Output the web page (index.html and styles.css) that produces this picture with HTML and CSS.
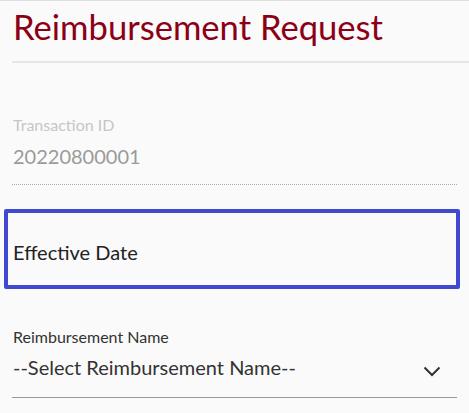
FILE: index.html
```html
<!DOCTYPE html>
<html>
<head>
<meta charset="utf-8">
<link rel="stylesheet" href="styles.css">
</head>
<body>
<div class="page">
  <header class="header">
    <h1 class="title">Reimbursement Request</h1>
  </header>
  <div class="form">
    <div class="field readonly">
      <div class="label">Transaction ID</div>
      <div class="value">20220800001</div>
    </div>
    <div class="focus-box">
      <div class="focus-text">Effective Date</div>
    </div>
    <div class="field select">
      <div class="label dark">Reimbursement Name</div>
      <div class="select-row">
        <span class="select-text">--Select Reimbursement Name--</span>
        <svg class="chevron" width="18" height="11" viewBox="0 0 18 11"><path d="M1.5 1.5 L9 9 L16.5 1.5" fill="none" stroke="#333" stroke-width="2"/></svg>
      </div>
    </div>
  </div>
</div>
</body>
</html>
```
FILE: styles.css
```css
html, body {
  margin: 0;
  padding: 0;
  background: #fafafa;
}
body {
  font-family: Lato, "Noto Sans", sans-serif;
}
.page {
  border-top: 1px solid #dedede;
  width: 469px;
  height: 412px;
  overflow: hidden;
}
.header {
  margin-left: 12px;
  padding-top: 5px;
  padding-bottom: 13px;
  border-bottom: 2px solid #e6e6e6;
}
.title {
  margin: 0;
  font-size: 34.6px;
  font-weight: 400;
  line-height: 42px;
  color: #8c0016;
  padding-left: 1px;
}
.form {
  padding: 0 12px;
}
.field {
  display: flex;
  flex-direction: column;
}
.readonly {
  padding-top: 53px;
  padding-bottom: 16px;
  border-bottom: 1px dotted #aaa;
}
.label {
  font-size: 16px;
  line-height: 18px;
  color: #c6c6c6;
  padding-left: 1px;
}
.value {
  margin-top: 10px;
  font-size: 20px;
  line-height: 24px;
  color: #9a9a9a;
  padding-left: 1px;
}
.focus-box {
  margin: 24px 0 0 -8px;
  width: 443px;
  height: 51px;
  border: 4px solid #4049cf;
  border-radius: 2px;
  display: flex;
  align-items: flex-end;
  padding: 0 0 21px 5px;
  box-sizing: content-box;
}
.focus-text {
  font-size: 20px;
  line-height: 24px;
  color: #222;
}
.select {
  padding-top: 39px;
  padding-bottom: 18px;
  border-bottom: 1px solid #999;
}
.label.dark {
  color: #333;
}
.select-row {
  margin-top: 9px;
  display: flex;
  align-items: center;
  justify-content: space-between;
}
.select-text {
  font-size: 20px;
  line-height: 24px;
  color: #333;
  padding-left: 1px;
}
.chevron {
  margin-right: 16px;
  margin-top: 8px;
}
```
